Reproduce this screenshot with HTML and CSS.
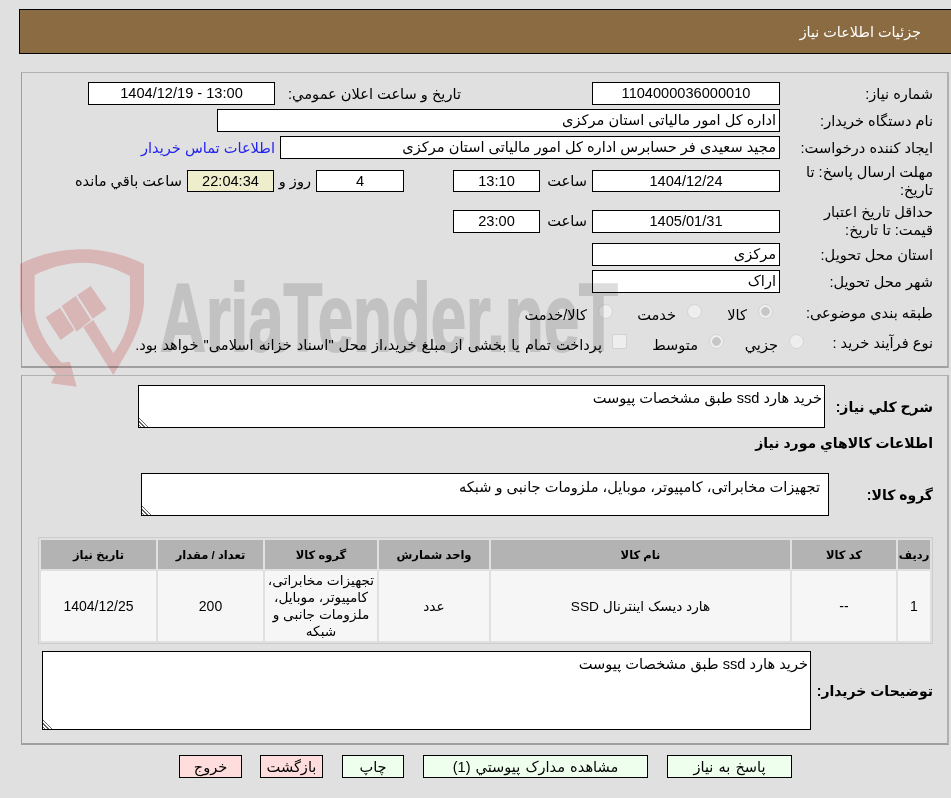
FILE: index.html
```html
<!DOCTYPE html>
<html lang="fa" dir="rtl">
<head>
<meta charset="utf-8">
<title>جزئیات اطلاعات نیاز</title>
<link rel="stylesheet" href="styles.css">
</head>
<body>
<header class="title-bar"><h1>جزئیات اطلاعات نیاز</h1></header>

<section class="panel panel-info">
  <div class="row r23">
    <div class="lbl">شماره نیاز:</div>
    <div class="box w188 center">1104000036000010</div>
    <div class="lbl2 l-date">تاريخ و ساعت اعلان عمومي:</div>
    <div class="box w187 center">13:00 - 1404/12/19</div>
  </div>
  <div class="row r23">
    <div class="lbl">نام دستگاه خریدار:</div>
    <div class="box w563">اداره کل امور مالیاتی استان مرکزی</div>
  </div>
  <div class="row r23">
    <div class="lbl">ایجاد کننده درخواست:</div>
    <div class="box w500">مجید سعیدی فر حسابرس اداره کل امور مالیاتی استان مرکزی</div>
    <a class="link" href="#">اطلاعات تماس خریدار</a>
  </div>
  <div class="row r36">
    <div class="lbl">مهلت ارسال پاسخ: تا تاریخ:</div>
    <div class="box w188 h22 center">1404/12/24</div>
    <div class="unit">ساعت</div>
    <div class="box w87 h22 center">13:10</div>
    <div class="box w88 h22 center days">4</div>
    <div class="unit unit-day">روز و</div>
    <div class="box w87 h22 center timer">22:04:34</div>
    <div class="unit-left">ساعت باقي مانده</div>
  </div>
  <div class="row r36">
    <div class="lbl">حداقل تاریخ اعتبار قیمت: تا تاریخ:</div>
    <div class="box w188 center">1405/01/31</div>
    <div class="unit">ساعت</div>
    <div class="box w87 center">23:00</div>
  </div>
  <div class="row r23">
    <div class="lbl">استان محل تحویل:</div>
    <div class="box w188">مرکزی</div>
  </div>
  <div class="row r23">
    <div class="lbl">شهر محل تحویل:</div>
    <div class="box w188">اراک</div>
  </div>
  <div class="row r-radio r-first">
    <div class="lbl">طبقه بندی موضوعی:</div>
    <label class="opt o-kala"><input type="radio" name="subject" checked disabled>کالا</label>
    <label class="opt o-khedmat"><input type="radio" name="subject" disabled>خدمت</label>
    <label class="opt"><input type="radio" name="subject" disabled>کالا/خدمت</label>
  </div>
  <div class="row r-radio">
    <div class="lbl">نوع فرآیند خرید :</div>
    <label class="opt o-jozi"><input type="radio" name="kind" disabled>جزیي</label>
    <label class="opt o-mid"><input type="radio" name="kind" checked disabled>متوسط</label>
    <label class="opt o-note"><input type="checkbox" disabled>پرداخت تمام یا بخشی از مبلغ خرید،از محل "اسناد خزانه اسلامی" خواهد بود.</label>
  </div>

  <svg class="wm-shield" viewBox="0 0 378 450" aria-hidden="true">
    <path class="wm-red" d="M0 72 C60 40 130 28 190 28 C250 28 320 45 372 72 L372 190 C365 270 320 340 280 405 L190 262 L220 240 L280 340 C310 300 330 250 330 200 L330 108 C280 82 235 68 190 68 C140 68 90 82 44 105 L44 210 C50 270 90 330 125 368 L150 365 L170 440 L93 430 L108 400 C50 350 5 280 0 200 Z"/>
    <path class="wm-red" d="M77 232 L120 203 L163 270 L122 300 Z M125 198 L167 168 L213 240 L170 275 Z M172 165 L212 138 L260 207 L218 236 Z"/>
  </svg>
  <div class="wm-text" aria-hidden="true">AriaTender.neT</div>
</section>

<section class="panel panel-items">
  <div class="row t-row t-desc">
    <div class="lbl strong lbl-t">شرح کلي نیاز:</div>
    <textarea class="ta ta-desc" readonly>خرید هارد ssd طبق مشخصات پیوست</textarea>
  </div>
  <h2 class="sub">اطلاعات کالاهاي مورد نیاز</h2>
  <div class="row t-row t-group">
    <div class="lbl strong lbl-g">گروه کالا:</div>
    <textarea class="ta ta-group" readonly>تجهیزات مخابراتی، کامپیوتر، موبایل، ملزومات جانبی و شبکه</textarea>
  </div>
  <table class="items">
    <colgroup>
      <col class="c1"><col class="c2"><col class="c3"><col class="c4"><col class="c5"><col class="c6"><col class="c7">
    </colgroup>
    <thead>
      <tr><th>ردیف</th><th>کد کالا</th><th>نام کالا</th><th>واحد شمارش</th><th>گروه کالا</th><th>تعداد / مقدار</th><th>تاریخ نیاز</th></tr>
    </thead>
    <tbody>
      <tr><td class="num">1</td><td class="num">--</td><td>هارد دیسک اینترنال SSD</td><td>عدد</td><td>تجهیزات مخابراتی، کامپیوتر، موبایل، ملزومات جانبی و شبکه</td><td class="num">200</td><td class="num">1404/12/25</td></tr>
    </tbody>
  </table>
  <div class="row t-row t-notes">
    <div class="lbl strong lbl-n">توضیحات خریدار:</div>
    <textarea class="ta ta-notes" readonly>خرید هارد ssd طبق مشخصات پیوست</textarea>
  </div>
</section>

<nav class="actions">
  <button class="btn go b-answer" type="button">پاسخ به نیاز</button>
  <button class="btn go b-docs" type="button">مشاهده مدارک پیوستي (1)</button>
  <button class="btn go b-print" type="button">چاپ</button>
  <button class="btn stop b-back" type="button">بازگشت</button>
  <button class="btn stop b-exit" type="button">خروج</button>
</nav>
</body>
</html>
```
FILE: styles.css
```css
* { box-sizing: border-box; }
html, body { margin: 0; height: 798px; overflow: hidden; }
body {
  background: #e0e0e0;
  color: #000;
  font: 14.6px/18px "Liberation Sans", "DejaVu Sans", sans-serif;
  padding-top: 9px;
}
.title-bar {
  height: 45px;
  margin: 0 -2px 0 19px;
  background: #8b6b41;
  border: 1px solid #000;
  display: flex;
  align-items: center;
}
.title-bar h1 {
  margin: 0 31px 0 0;
  font-size: 14.4px;
  font-weight: normal;
  color: #fff;
}
.panel {
  position: relative;
  margin: 0 2px 0 0;
  margin-left: 21px;
  border-style: solid;
  border-width: 1px 2px 2px 1px;
  border-color: #b0b0b0 #b0b0b0 #a0a0a0 #a0a0a0;
}
.panel-info { margin-top: 18px; height: 296px; padding: 9px 14px 0 0; }
.panel-items { margin-top: 7px; height: 370px; padding: 9px 14px 0 0; }
.row { display: flex; align-items: center; margin-bottom: 4px; position: relative; }
.r23 { height: 23px; }
.r36 { height: 36px; }
.r-radio { height: 26px; margin-bottom: 4px; }
.r-first { margin-top: 7px; }
.lbl { width: 153px; padding-left: 8px; flex: none; }
.strong { font-weight: bold; font-size: 14px; }
.box {
  flex: none;
  height: 23px;
  line-height: 21px;
  padding: 0 3px;
  background: #fff;
  border: 1px solid #000;
  white-space: nowrap;
  overflow: hidden;
}
.center { text-align: center; padding: 0; }
.h22 { height: 22px; line-height: 20px; }
.w188 { width: 188px; }
.w187 { width: 187px; }
.w563 { width: 563px; }
.w500 { width: 500px; }
.w87 { width: 87px; }
.w88 { width: 88px; }
.lbl2 { flex: none; }
.l-date { width: 317px; padding-right: 131px; white-space: nowrap; }
.link { color: #2222ee; text-decoration: none; margin-right: 5px; white-space: nowrap; }
.unit { width: 52px; padding-right: 5px; flex: none; }
.days { margin-right: 49px; }
.unit-day { width: 42px; padding-right: 5px; flex: none; white-space: nowrap; }
.timer { background: #eeeecc; }
.unit-left { margin-right: 5px; white-space: nowrap; }
.opt { display: flex; align-items: center; white-space: nowrap; padding-top: 4px; flex: none; }
.opt input {
  appearance: none;
  width: 15px;
  height: 15px;
  margin: -8px 7px 0 11px;
  flex: none;
  background: #eeeeee;
  border: 1px solid #d2d2d2;
  border-radius: 50%;
}
.opt input:checked { background: radial-gradient(circle, #c6c6c6 0 4px, #eeeeee 4.6px); }
.opt input[type="checkbox"] { border-radius: 2px; margin-left: 10px; }
.o-kala { width: 71px; }
.o-khedmat { width: 89px; }
.o-jozi { width: 80px; margin-right: -31px; }
.o-mid { width: 97px; }
.o-note { word-spacing: 1px; }
.t-row { margin: 0; }
.ta {
  display: block;
  border: 1px solid #000;
  background: #fff;
  font: 14.6px/18px "Liberation Sans", "DejaVu Sans", sans-serif;
  padding: 3px 2px;
  border-radius: 0;
  outline: none;
  flex: none;
  overflow: hidden;
}
.ta::-webkit-resizer {
  background: linear-gradient(45deg, transparent 0 1px, #666 1px 2px, transparent 2px 3.5px, #666 3.5px 4.5px, transparent 4.5px 6px, #666 6px 7px, transparent 7px) left bottom / 10px 10px no-repeat;
}
.lbl-t { width: 108px; padding: 0; }
.ta-desc { width: 687px; height: 43px; }
.sub { margin: 6px 0 21px; font-size: 14px; line-height: 18px; font-weight: bold; }
.lbl-g { width: 104px; padding: 0; }
.ta-group { width: 688px; height: 43px; padding: 4px 8px 0; }
.items {
  table-layout: fixed;
  width: 895px;
  margin: 21px 0 0 0;
  border: 1px solid #ccc;
  border-collapse: separate;
  border-spacing: 2px;
}
.c1 { width: 32px; } .c2 { width: 104px; } .c3 { width: 299px; } .c4 { width: 110px; }
.c5 { width: 112px; } .c6 { width: 105px; } .c7 { width: 115px; }
.items th { height: 29px; padding: 0; background: #b3b3b3; font-size: 11.5px; font-weight: bold; white-space: nowrap; }
.items td { height: 70px; padding: 0 1px; background: #f6f6f6; text-align: center; font-size: 13.7px; line-height: 17px; }
.items td.num { font-size: 14px; }
.t-notes { margin-top: 7px; }
.lbl-n { width: 122px; padding: 0; }
.ta-notes { width: 769px; height: 79px; }
.actions { position: relative; height: 22px; margin-top: 10px; display: flex; padding-right: 159px; }
.btn {
  flex: none;
  height: 23px;
  padding: 0;
  border: 1px solid #000;
  font: 14.6px/18px "Liberation Sans", "DejaVu Sans", sans-serif;
  word-spacing: 1px;
  color: #000;
  border-radius: 0;
}
.go { background: #eeffee; }
.stop { background: #ffdddd; }
.b-answer { width: 125px; margin-left: 19px; }
.b-docs { width: 225px; margin-left: 19px; }
.b-print { width: 62px; margin-left: 19px; }
.b-back { width: 63px; margin-left: 18px; }
.b-exit { width: 63px; }
.wm-shield {
  position: absolute;
  left: -2px;
  top: 167px;
  width: 126px;
  height: 150px;
  mix-blend-mode: multiply;
  pointer-events: none;
}
.wm-red { fill: #f7cfd0; }
.wm-text {
  position: absolute;
  left: 138px;
  top: 195px;
  direction: ltr;
  font: bold 97px/100px "Liberation Sans", sans-serif;
  color: #dddddd;
  -webkit-text-stroke: 2px #dddddd;
  transform: scaleX(.655);
  transform-origin: left top;
  white-space: nowrap;
  mix-blend-mode: multiply;
  pointer-events: none;
}
```
